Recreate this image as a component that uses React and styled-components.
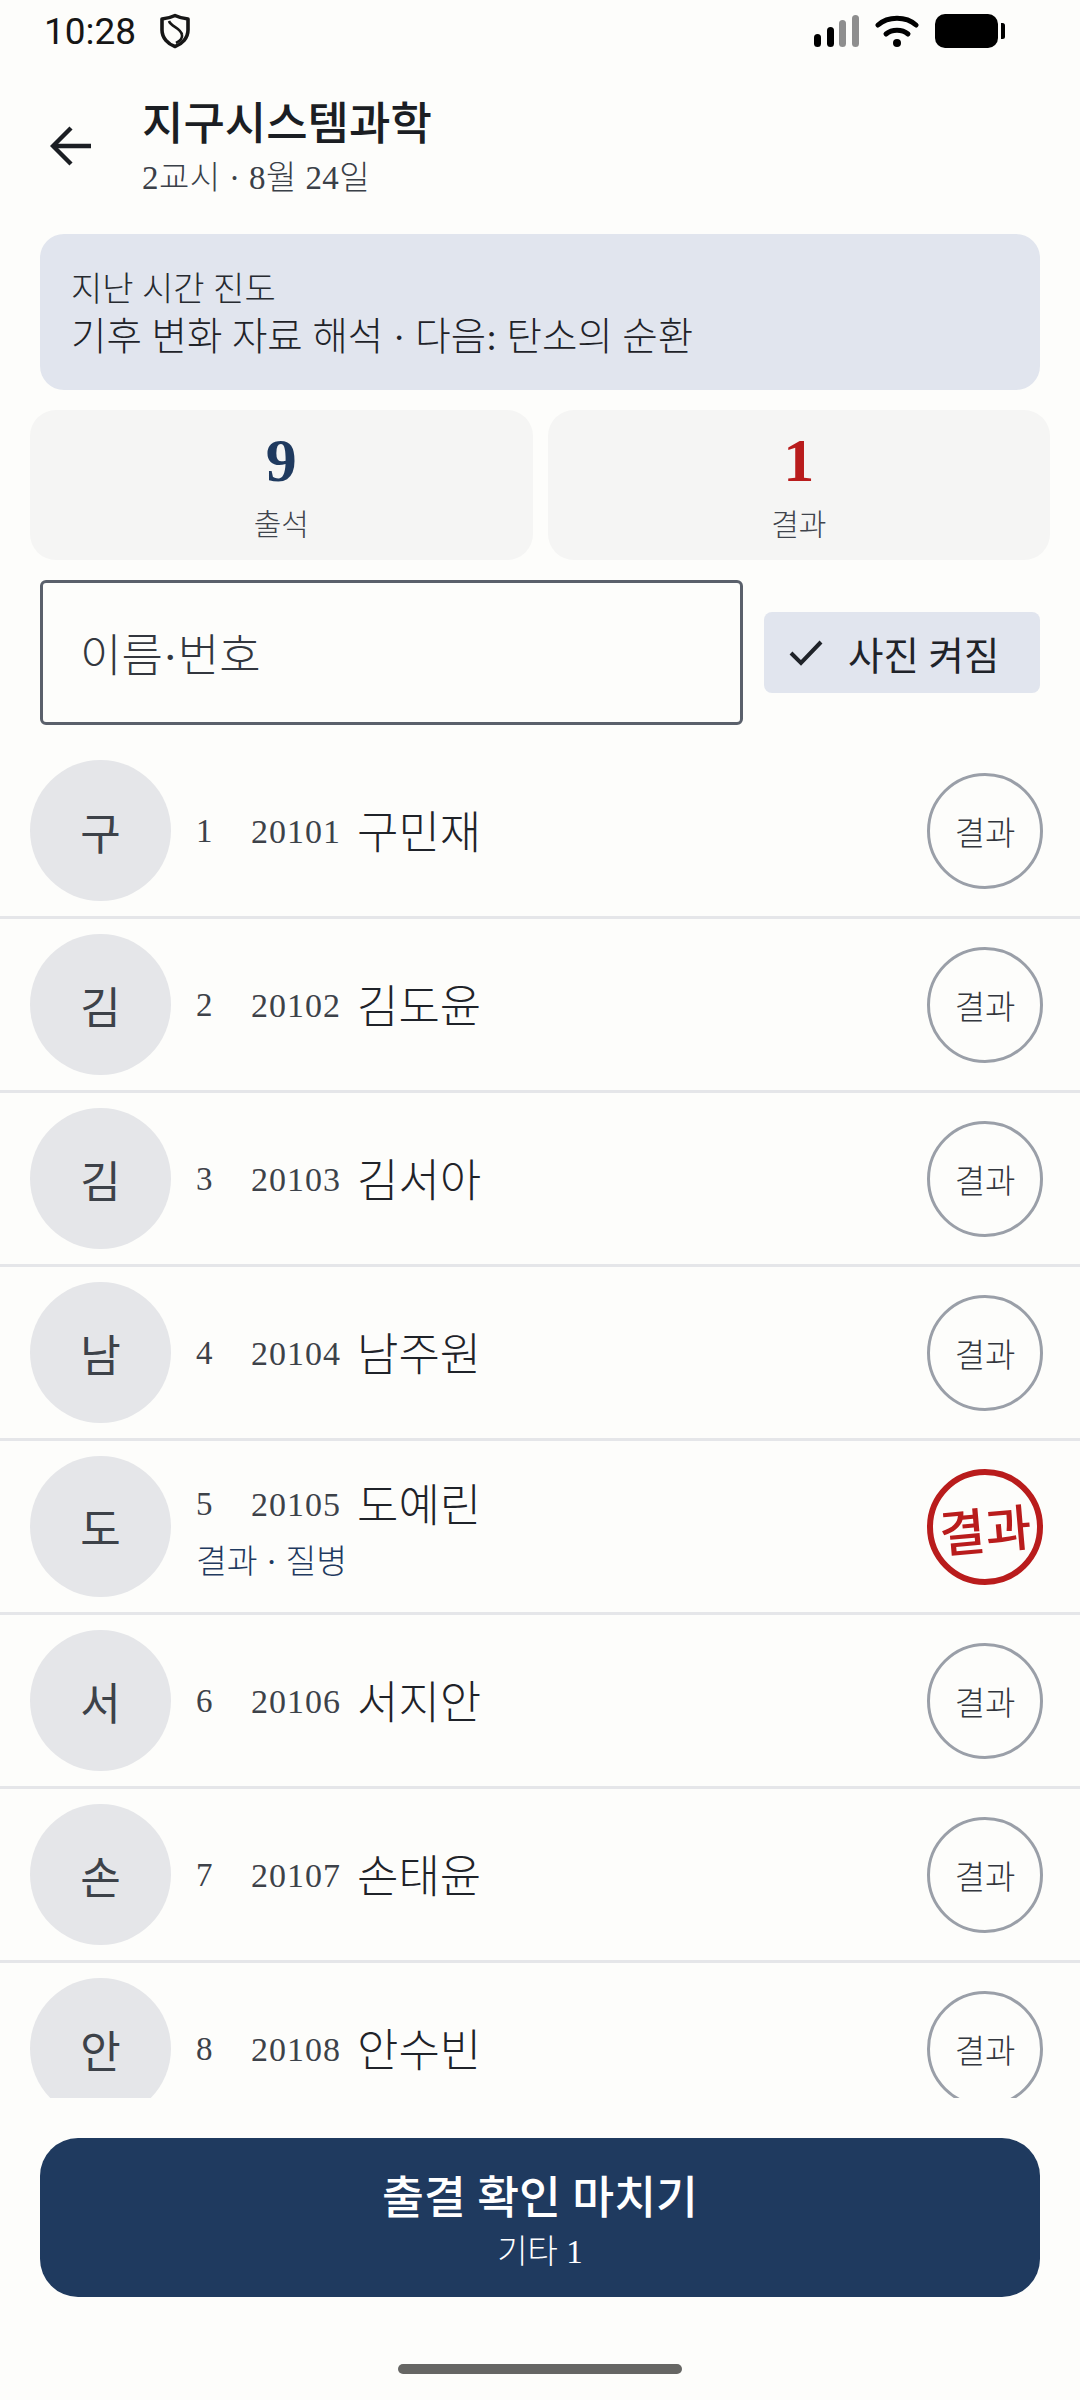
import React from 'react';
import styled, { createGlobalStyle } from 'styled-components';

const SERIF = '"Liberation Serif", "Noto Sans CJK KR", serif';

const GlobalStyle = createGlobalStyle`
  html, body { margin: 0; padding: 0; background: #fdfdfb; }
  * { box-sizing: border-box; }
`;

const students = [
  { no: 1, id: '20101', name: '구민재' },
  { no: 2, id: '20102', name: '김도윤' },
  { no: 3, id: '20103', name: '김서아' },
  { no: 4, id: '20104', name: '남주원' },
  { no: 5, id: '20105', name: '도예린', note: '결과 · 질병', absent: true },
  { no: 6, id: '20106', name: '서지안' },
  { no: 7, id: '20107', name: '손태윤' },
  { no: 8, id: '20108', name: '안수빈' },
];

const Page = styled.div`
  width: 1080px;
  height: 2400px;
  display: flex;
  flex-direction: column;
  overflow: hidden;
  background: #fdfdfb;
  font-family: ${SERIF};
  font-weight: 300;
  color: #1f2329;
`;

const StatusBar = styled.div`
  height: 62px;
  flex: none;
  display: flex;
  align-items: center;
  padding: 0 75px 0 44px;
`;

const Time = styled.span`
  font-family: Roboto, sans-serif;
  font-weight: 400;
  font-size: 37px;
  color: #161616;
  margin-right: 23px;
`;

const StatusIcons = styled.div`
  margin-left: auto;
  display: flex;
  align-items: center;
  gap: 16px;
`;

const Header = styled.header`
  flex: none;
  display: flex;
  align-items: center;
  margin-top: 34px;
  padding-left: 50px;
  gap: 51px;
  svg { margin-top: -3px; }
`;

const HeaderText = styled.div`
  display: flex;
  flex-direction: column;
  gap: 6px;
`;

const Title = styled.h1`
  margin: 2px 0 0;
  font-size: 45px;
  line-height: 54px;
  font-weight: 500;
  color: #1b1e23;
`;

const Subtitle = styled.div`
  font-size: 33px;
  line-height: 40px;
  letter-spacing: 0.4px;
  color: #3a4048;
`;

const Banner = styled.section`
  flex: none;
  margin: 36px 40px 0;
  height: 156px;
  padding: 34px 31px 0;
  background: #e1e5ee;
  border-radius: 24px;
`;

const BannerLabel = styled.div`
  font-size: 34px;
  line-height: 43px;
  color: #262a30;
`;

const BannerText = styled.div`
  font-size: 38.5px;
  line-height: 52px;
  color: #1f2329;
`;

const Stats = styled.div`
  flex: none;
  display: flex;
  gap: 15px;
  margin-top: 20px;
  padding: 0 30px;
`;

const Stat = styled.div`
  flex: 1;
  height: 150px;
  background: #f5f5f4;
  border-radius: 26px;
  display: flex;
  flex-direction: column;
  align-items: center;
  padding-top: 15px;
`;

const StatValue = styled.div`
  font-size: 62px;
  line-height: 70px;
  font-weight: 700;
  color: ${p => p.$color};
`;

const StatLabel = styled.div`
  margin-top: 8px;
  font-size: 30px;
  line-height: 44px;
  color: #3f444c;
`;

const Controls = styled.div`
  flex: none;
  display: flex;
  align-items: center;
  gap: 21px;
  margin-top: 20px;
  padding: 0 40px;
`;

const SearchBox = styled.div`
  width: 703px;
  height: 145px;
  border: 3px solid #5a606b;
  border-radius: 6px;
  display: flex;
  align-items: center;
  padding-left: 37px;
  font-size: 45px;
  color: #33373e;
`;

const PhotoChip = styled.div`
  flex: 1;
  height: 81px;
  background: #e1e5ee;
  border-radius: 8px;
  display: flex;
  align-items: center;
  padding-left: 25px;
  gap: 25px;
  font-size: 38.5px;
  font-weight: 400;
  color: #1f2329;
`;

const List = styled.div`
  flex: 1;
  min-height: 0;
  overflow: hidden;
  margin-top: 20px;
`;

const Row = styled.div`
  height: 174px;
  display: flex;
  align-items: center;
  padding: 0 37px 0 30px;
  border-bottom: 3px solid #e5e6e9;
`;

const Avatar = styled.div`
  width: 141px;
  height: 141px;
  flex: none;
  border-radius: 50%;
  background: #e5e6e9;
  display: flex;
  align-items: center;
  justify-content: center;
  font-size: 44px;
  font-weight: 400;
  color: #3d4249;
`;

const Info = styled.div`
  flex: 1;
  margin-left: 25px;
  padding-top: 6px;
  display: flex;
  flex-direction: column;
`;

const InfoLine = styled.div`
  display: flex;
  align-items: center;
`;

const Num = styled.span`
  width: 55px;
  margin-bottom: 4px;
  font-size: 33px;
  color: #3d4249;
`;

const StudentId = styled.span`
  width: 106px;
  margin-bottom: 4px;
  font-size: 34px;
  letter-spacing: 1px;
  color: #3d4249;
`;

const Name = styled.span`
  font-size: 45px;
  line-height: 58px;
  color: #1f2329;
`;

const Note = styled.div`
  margin-bottom: -6px;
  font-size: 33.5px;
  line-height: 52px;
  color: #1f3a5f;
`;

const Mark = styled.div`
  width: 116px;
  height: 116px;
  flex: none;
  border-radius: 50%;
  border: ${p => (p.$absent ? '6px solid #b91c1c' : '3px solid #9a9fa8')};
  display: flex;
  align-items: center;
  justify-content: center;
  white-space: nowrap;
  font-size: ${p => (p.$absent ? '50px' : '33px')};
  font-weight: ${p => (p.$absent ? 500 : 300)};
  color: ${p => (p.$absent ? '#b91c1c' : '#33373e')};
  span { flex: none; transform: ${p => (p.$absent ? 'rotate(-5deg)' : 'none')}; }
`;

const Footer = styled.footer`
  flex: none;
  height: 302px;
  padding: 40px 40px 0;
`;

const FinishButton = styled.button`
  width: 100%;
  height: 159px;
  border: none;
  border-radius: 38px;
  padding: 6px 0 0;
  background: #1f3a5f;
  color: #fff;
  font-family: inherit;
  display: flex;
  flex-direction: column;
  align-items: center;
  justify-content: center;
`;

const FinishTitle = styled.span`
  font-size: 45.5px;
  line-height: 60px;
  font-weight: 500;
`;

const FinishSub = styled.span`
  margin-top: 2px;
  font-size: 33px;
  line-height: 42px;
  font-weight: 300;
`;

const HomeBar = styled.div`
  width: 284px;
  height: 10px;
  margin: 67px auto 0;
  border-radius: 5px;
  background: #666664;
`;

function ShieldIcon() {
  return (
    <svg width="32" height="36" viewBox="0 0 32 36" fill="none" stroke="#161616" strokeWidth="3.6">
      <path d="M16 2.5 C20 4.5 24 5.5 29 6 V17 C29 25 23 31 16 33.5 C9 31 3 25 3 17 V6 C8 5.5 12 4.5 16 2.5 Z" strokeLinejoin="round" />
      <path d="M10 8 C12 14 22 15 23 22 C23.5 25 21 28 17 30" strokeWidth="2.6" />
    </svg>
  );
}

function SignalIcon() {
  return (
    <svg width="45" height="32" viewBox="0 0 45 32">
      <rect x="0" y="19" width="7" height="13" rx="3.5" fill="#000" />
      <rect x="13" y="12" width="7" height="20" rx="3.5" fill="#000" />
      <rect x="25" y="5" width="7" height="27" rx="3.5" fill="#8e8e8e" />
      <rect x="38" y="0" width="7" height="32" rx="3.5" fill="#8e8e8e" />
    </svg>
  );
}

function WifiIcon() {
  return (
    <svg width="44" height="32" viewBox="0 0 44 32" fill="none" stroke="#000" strokeWidth="5" strokeLinecap="round">
      <path d="M3 10 C13 1 31 1 41 10" />
      <path d="M11 19 C17 14 27 14 33 19" />
      <circle cx="22" cy="28" r="4" fill="#000" stroke="none" />
    </svg>
  );
}

function BatteryIcon() {
  return (
    <svg width="70" height="34" viewBox="0 0 70 34">
      <rect x="0" y="0" width="63" height="34" rx="10" fill="#000" />
      <path d="M66 9 h1.5 a2.5 2.5 0 0 1 2.5 2.5 v11 a2.5 2.5 0 0 1 -2.5 2.5 h-1.5 Z" fill="#000" />
    </svg>
  );
}

function BackIcon() {
  return (
    <svg width="41" height="40" viewBox="0 0 41 40" fill="none" stroke="#1b1e23" strokeWidth="4.4">
      <path d="M41 20 H4" />
      <path d="M21 2 L3 20 L21 38" />
    </svg>
  );
}

function CheckIcon() {
  return (
    <svg width="34" height="28" viewBox="0 0 34 28" fill="none" stroke="#1f2329" strokeWidth="4">
      <path d="M2 14 L12 24 L32 3" />
    </svg>
  );
}

export default function App() {
  return (
    <Page>
      <GlobalStyle />
      <StatusBar>
        <Time>10:28</Time>
        <ShieldIcon />
        <StatusIcons>
          <SignalIcon />
          <WifiIcon />
          <BatteryIcon />
        </StatusIcons>
      </StatusBar>

      <Header>
        <BackIcon />
        <HeaderText>
          <Title>지구시스템과학</Title>
          <Subtitle>2교시 · 8월 24일</Subtitle>
        </HeaderText>
      </Header>

      <Banner>
        <BannerLabel>지난 시간 진도</BannerLabel>
        <BannerText>기후 변화 자료 해석 · 다음: 탄소의 순환</BannerText>
      </Banner>

      <Stats>
        <Stat>
          <StatValue $color="#1f3a5f">9</StatValue>
          <StatLabel>출석</StatLabel>
        </Stat>
        <Stat>
          <StatValue $color="#b91c1c">1</StatValue>
          <StatLabel>결과</StatLabel>
        </Stat>
      </Stats>

      <Controls>
        <SearchBox>이름·번호</SearchBox>
        <PhotoChip>
          <CheckIcon />
          사진 켜짐
        </PhotoChip>
      </Controls>

      <List>
        {students.map(s => (
          <Row key={s.no}>
            <Avatar>{s.name[0]}</Avatar>
            <Info>
              <InfoLine>
                <Num>{s.no}</Num>
                <StudentId>{s.id}</StudentId>
                <Name>{s.name}</Name>
              </InfoLine>
              {s.note && <Note>{s.note}</Note>}
            </Info>
            <Mark $absent={s.absent}><span>결과</span></Mark>
          </Row>
        ))}
      </List>

      <Footer>
        <FinishButton>
          <FinishTitle>출결 확인 마치기</FinishTitle>
          <FinishSub>기타 1</FinishSub>
        </FinishButton>
        <HomeBar />
      </Footer>
    </Page>
  );
}
